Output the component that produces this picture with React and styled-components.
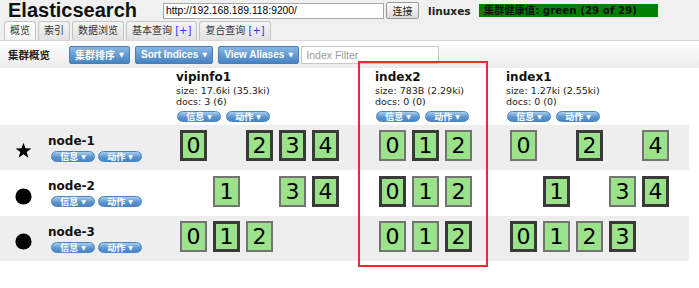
import React from 'react';
import styled, { createGlobalStyle } from 'styled-components';

const GlobalStyle = createGlobalStyle`
  html, body { margin: 0; padding: 0; background: #fff; }
  body {
    font-family: "DejaVu Sans", "Noto Sans CJK SC", sans-serif;
    width: 699px; height: 288px; overflow: hidden; color: #000;
  }
  * { box-sizing: border-box; }
`;

const Page = styled.div`
  position: relative;
  width: 699px;
  height: 288px;
`;

const Header = styled.div`
  background: #f0f0f0;
`;

const HeaderTop = styled.div`
  display: flex;
  align-items: center;
  height: 21px;
  padding-left: 8px;
`;

const Title = styled.div`
  font-family: "Liberation Sans", Arial, sans-serif;
  font-weight: bold;
  font-size: 20px;
  line-height: 21px;
  width: 155px;
  color: #111;
`;

const UrlInput = styled.input`
  width: 221px;
  height: 16px;
  border: 1px solid #a8a8a8;
  background: #fff;
  font-family: "Liberation Sans", Arial, sans-serif;
  font-size: 10.3px;
  padding: 0 2px;
  color: #000;
  outline: none;
`;

const ConnectButton = styled.button`
  margin-left: 2px;
  width: 33px;
  height: 17px;
  padding: 0;
  font-family: "Noto Sans CJK SC", sans-serif;
  font-size: 10px;
  color: #222;
  border: 1px solid #9a9a9a;
  border-radius: 2px;
  background: linear-gradient(#fafafa, #dcdcdc);
`;

const ClusterName = styled.div`
  margin-left: 9px;
  font-weight: bold;
  font-size: 10.6px;
  color: #222;
`;

const Health = styled.div`
  margin-left: 8px;
  width: 179px;
  height: 13px;
  line-height: 13px;
  padding-left: 5px;
  background: #008000;
  color: #111;
  font-weight: bold;
  font-size: 10.3px;
  white-space: nowrap;
`;

const Tabs = styled.div`
  display: flex;
  align-items: flex-end;
  height: 19px;
  padding-left: 4px;
`;

const Tab = styled.div`
  height: 19px;
  line-height: 18px;
  padding: 0 5px;
  margin-right: 2px;
  border: 1px solid #c4c4c4;
  border-bottom: none;
  border-radius: 3px 3px 0 0;
  background: ${p => (p.$active ? 'linear-gradient(#fdfdfd, #f3f3f3)' : 'linear-gradient(#f4f4f4, #e2e2e2)')};
  font-size: 10px;
  color: #333;
  white-space: nowrap;
`;

const Plus = styled.span`
  color: #3333ee;
  font-family: "DejaVu Sans", sans-serif;
`;

const Toolbar = styled.div`
  display: flex;
  align-items: center;
  height: 28px;
  padding-left: 8px;
  border-top: 1px solid #d6d6d6;
  background: linear-gradient(#ffffff, #ececec);
`;

const ToolbarTitle = styled.div`
  font-family: "Noto Sans CJK SC", sans-serif;
  font-weight: bold;
  font-size: 10.5px;
  color: #222;
  width: 61px;
`;

const ToolButton = styled.div`
  display: flex;
  align-items: center;
  height: 18px;
  padding: 0 5px;
  margin-right: 5px;
  border: 1px solid #4a7db4;
  border-radius: 2px;
  background: linear-gradient(#86b6e4, #4682c3);
  color: #fff;
  font-family: "Liberation Sans", "Noto Sans CJK SC", sans-serif;
  font-weight: bold;
  font-size: 10px;
  white-space: nowrap;
`;

const Caret = styled.span`
  margin-left: 4px;
  font-size: 6.5px;
  font-family: "DejaVu Sans", sans-serif;
`;

const Filter = styled.input`
  width: 138px;
  height: 18px;
  margin-left: -3px;
  border: 1px solid #c8c8c8;
  padding: 0 4px;
  font-family: "Liberation Sans", Arial, sans-serif;
  font-size: 10.5px;
  background: #fff;
  outline: none;
  &::placeholder { color: #9a9a9a; }
`;

const COLS = '176px 199px 131px 183px';

const TableHead = styled.div`
  display: grid;
  grid-template-columns: ${COLS};
  height: 57px;
`;

const Row = styled.div`
  display: grid;
  grid-template-columns: ${COLS};
  width: 689px;
  height: ${p => p.$h}px;
  background: ${p => (p.$grey ? '#eeeeee' : '#ffffff')};
`;

const IndexHead = styled.div`
  padding-top: 2px;
`;

const IndexName = styled.div`
  font-weight: bold;
  font-size: 12px;
  line-height: 15px;
  color: #111;
`;

const Stat = styled.div`
  font-size: 9.5px;
  line-height: 11px;
  color: #222;
`;

const Pills = styled.div`
  display: flex;
  gap: ${p => p.$gap || 4}px;
  margin-top: ${p => p.$mt || 3}px;
  margin-left: ${p => p.$ml || 0}px;
`;

const Pill = styled.div`
  display: flex;
  align-items: center;
  justify-content: center;
  width: 44px;
  height: 11px;
  border-radius: 6px;
  border: 1px solid #4b84c0;
  background: linear-gradient(#a9cdef, #5d96d0 55%, #4a86c6);
  color: #fff;
  font-family: "Noto Sans CJK SC", sans-serif;
  font-weight: bold;
  font-size: 9px;
  line-height: 9px;
  white-space: nowrap;
`;

const PillCaret = styled.span`
  margin-left: 3px;
  font-size: 6px;
  font-family: "DejaVu Sans", sans-serif;
`;

const NodeCell = styled.div`
  display: flex;
  align-items: center;
  padding-left: 15px;
`;

const NodeIcon = styled.svg`
  width: 17px;
  height: 17px;
  margin-top: 6px;
  margin-right: 16px;
  flex: none;
`;

const NodeInfo = styled.div`
  display: flex;
  flex-direction: column;
`;

const NodeName = styled.div`
  font-weight: bold;
  font-size: 12px;
  line-height: 14px;
  color: #111;
`;

const ShardCell = styled.div`
  display: flex;
  gap: 6px;
  padding-left: 4px;
  padding-top: ${p => p.$pt}px;
`;

const Shard = styled.div`
  width: 27px;
  height: 31px;
  flex: none;
  display: flex;
  align-items: center;
  justify-content: center;
  background: #9be28b;
  border: ${p => (p.$primary ? '3px solid #3a3a3a' : '2px solid #737373')};
  font-size: 22px;
  line-height: 1;
  color: #000;
`;

const Slot = styled.div`
  width: 27px;
  height: 31px;
  flex: none;
`;

const Highlight = styled.div`
  position: absolute;
  left: 358px;
  top: 61px;
  width: 130px;
  height: 206px;
  border: 2px solid #ee2b2b;
  pointer-events: none;
`;

const indices = [
  { name: 'vipinfo1', size: 'size: 17.6ki (35.3ki)', docs: 'docs: 3 (6)' },
  { name: 'index2', size: 'size: 783B (2.29ki)', docs: 'docs: 0 (0)' },
  { name: 'index1', size: 'size: 1.27ki (2.55ki)', docs: 'docs: 0 (0)' },
];

// per node, per index: map shard number -> primary?
const nodes = [
  {
    name: 'node-1', icon: 'star', grey: true, h: 45, pt: 5,
    shards: [
      { 0: true, 2: true, 3: true, 4: true },
      { 0: false, 1: true, 2: false },
      { 0: false, 2: true, 4: false },
    ],
  },
  {
    name: 'node-2', icon: 'dot', grey: false, h: 46, pt: 6,
    shards: [
      { 1: false, 3: false, 4: true },
      { 0: true, 1: false, 2: false },
      { 1: true, 3: false, 4: true },
    ],
  },
  {
    name: 'node-3', icon: 'dot', grey: true, h: 45, pt: 5,
    shards: [
      { 0: false, 1: true, 2: false },
      { 0: false, 1: false, 2: true },
      { 0: true, 1: false, 2: false, 3: true },
    ],
  },
];

const PillPair = ({ gap, mt, ml }) => (
  <Pills $gap={gap} $mt={mt} $ml={ml}>
    <Pill>信息<PillCaret>▼</PillCaret></Pill>
    <Pill>动作<PillCaret>▼</PillCaret></Pill>
  </Pills>
);

const Icon = ({ kind }) => (
  <NodeIcon viewBox="0 0 16 16">
    {kind === 'star' ? (
      <path d="M8 0.6 L9.9 5.9 L15.5 6 L11 9.4 L12.6 14.9 L8 11.6 L3.4 14.9 L5 9.4 L0.5 6 L6.1 5.9 Z" fill="#000" />
    ) : (
      <circle cx="8" cy="8" r="7.6" fill="#000" />
    )}
  </NodeIcon>
);

export default function App() {
  return (
    <Page>
      <GlobalStyle />
      <Header>
        <HeaderTop>
          <Title>Elasticsearch</Title>
          <UrlInput defaultValue="http://192.168.189.118:9200/" />
          <ConnectButton>连接</ConnectButton>
          <ClusterName>linuxes</ClusterName>
          <Health>集群健康值: green (29 of 29)</Health>
        </HeaderTop>
        <Tabs>
          <Tab $active>概览</Tab>
          <Tab>索引</Tab>
          <Tab>数据浏览</Tab>
          <Tab>基本查询 <Plus>[+]</Plus></Tab>
          <Tab>复合查询 <Plus>[+]</Plus></Tab>
        </Tabs>
      </Header>
      <Toolbar>
        <ToolbarTitle>集群概览</ToolbarTitle>
        <ToolButton>集群排序<Caret>▼</Caret></ToolButton>
        <ToolButton>Sort Indices<Caret>▼</Caret></ToolButton>
        <ToolButton>View Aliases<Caret>▼</Caret></ToolButton>
        <Filter placeholder="Index Filter" />
      </Toolbar>
      <TableHead>
        <div />
        {indices.map(ix => (
          <IndexHead key={ix.name}>
            <IndexName>{ix.name}</IndexName>
            <Stat>{ix.size}</Stat>
            <Stat>{ix.docs}</Stat>
            <PillPair gap={5} mt={4} ml={1} />
          </IndexHead>
        ))}
      </TableHead>
      {nodes.map(n => (
        <Row key={n.name} $grey={n.grey} $h={n.h}>
          <NodeCell>
            <Icon kind={n.icon} />
            <NodeInfo>
              <NodeName>{n.name}</NodeName>
              <PillPair gap={3} mt={3} ml={3} />
            </NodeInfo>
          </NodeCell>
          {indices.map((ix, i) => {
            const map = n.shards[i];
            const max = Math.max(...Object.keys(map).map(Number));
            const slots = [];
            for (let s = 0; s <= max; s++) {
              slots.push(
                s in map ? (
                  <Shard key={s} $primary={map[s]}>{s}</Shard>
                ) : (
                  <Slot key={s} />
                )
              );
            }
            return <ShardCell key={ix.name} $pt={n.pt}>{slots}</ShardCell>;
          })}
        </Row>
      ))}
      <Highlight />
    </Page>
  );
}
